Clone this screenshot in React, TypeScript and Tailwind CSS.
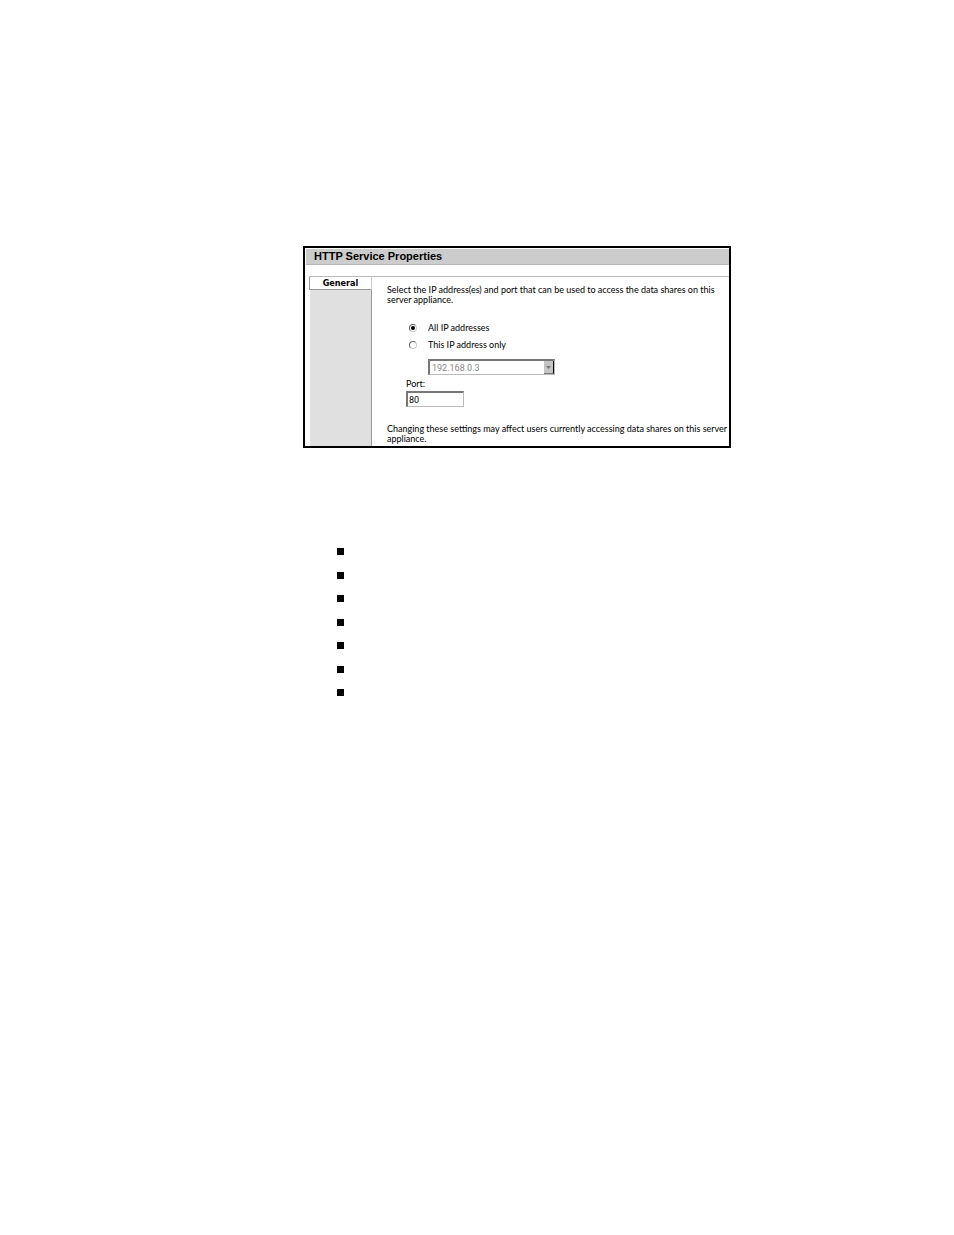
import React, { useState } from 'react';

const notes = [1, 2, 3, 4, 5, 6, 7];

const radioClass =
  "grid size-2 shrink-0 appearance-none place-items-center rounded-full border border-[#ccc] border-t-[#666] border-l-[#666] bg-white before:size-1 before:rounded-full before:content-[''] checked:before:bg-black";

const App: React.FC = () => {
  const [scope, setScope] = useState('all');
  const [port, setPort] = useState('80');

  return (
    <main className="min-h-screen bg-white pt-[246px] pr-[223px] pl-[303px] font-[Lato,sans-serif] text-[9px] leading-[10px] text-black">
      <section className="border-2 border-black pt-px pl-px">
        <h1 className="h-4 border-b border-[#b8b8b8] bg-[#ccc] pl-2 font-['Liberation_Sans',sans-serif] text-[11px] leading-[15px] font-bold">
          HTTP Service Properties
        </h1>

        <div className="mt-[11px] ml-[3px] flex border-t border-[#bbb]">
          {/* Tab strip */}
          <nav className="flex w-[63px] shrink-0 flex-col">
            <button type="button" className="h-[13px] border-x border-b border-[#999] border-r-[#ccc] bg-white font-['DejaVu_Sans_Condensed','DejaVu_Sans',sans-serif] text-[9px] leading-3 font-bold">
              General
            </button>
            <div className="ml-px flex-1 border-r border-[#999] bg-[#e0e0e0]" />
          </nav>

          {/* Tab content */}
          <form className="min-w-0 flex-1 pt-2 pb-[2px] pl-[15px]">
            <p>
              Select the IP address(es) and port that can be used to access the data shares on this
              <br />
              server appliance.
            </p>

            <div className="mt-4 ml-[22px] flex flex-col gap-[3px]">
              <label className="flex h-[14px] items-center gap-[11px]">
                <input
                  type="radio"
                  name="scope"
                  value="all"
                  checked={scope === 'all'}
                  onChange={() => setScope('all')}
                  className={radioClass}
                />
                All IP addresses
              </label>
              <label className="flex h-[14px] items-center gap-[11px]">
                <input
                  type="radio"
                  name="scope"
                  value="single"
                  checked={scope === 'single'}
                  onChange={() => setScope('single')}
                  className={radioClass}
                />
                This IP address only
              </label>
            </div>

            <div className="relative mt-[7px] ml-[41px] h-4 w-[127px]">
              <select
                aria-label="IP address"
                disabled={scope === 'all'}
                className="block h-4 w-full appearance-none border-t-2 border-r border-b border-l-2 border-t-[#777] border-r-[#bbb] border-b-[#bbb] border-l-[#777] bg-white pl-[2px] font-[Roboto,sans-serif] text-[9px] leading-3 disabled:text-[#888] disabled:opacity-100"
              >
                <option>192.168.0.3</option>
              </select>
              <span className="pointer-events-none absolute top-[2px] right-px flex h-[13px] w-[10px] items-center justify-center border-r border-b border-r-black border-b-[#777] bg-[#c4c4c4]">
                <svg viewBox="0 0 5 3" className="h-[3px] w-[5px]" aria-hidden="true">
                  <path d="M0 0h5L2.500 3z" fill="#777" />
                </svg>
              </span>
            </div>

            <div className="mt-[3px] ml-[19px]">
              <label htmlFor="port" className="block leading-3">Port:</label>
              <input
                id="port"
                type="text"
                value={port}
                onChange={e => setPort(e.target.value)}
                className="mt-px block h-4 w-[58px] border-t-2 border-r border-b border-l-2 border-t-[#777] border-r-[#bbb] border-b-[#bbb] border-l-[#777] bg-white px-px font-[Roboto,sans-serif] text-[9px] leading-3"
              />
            </div>

            <p className="mt-[17px] whitespace-nowrap">
              Changing these settings may affect users currently accessing data shares on this server
              <br />
              appliance.
            </p>
          </form>
        </div>
      </section>

      <ul className="mt-[100px] ml-[34px] flex h-[148px] flex-col justify-between">
        {notes.map(n => (
          <li key={n} className="size-[7px] bg-black" />
        ))}
      </ul>
    </main>
  );
};

export default App;
